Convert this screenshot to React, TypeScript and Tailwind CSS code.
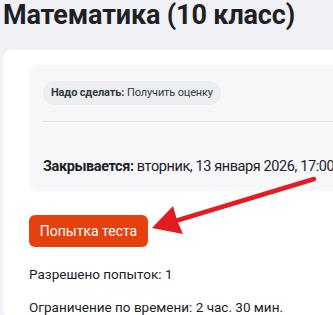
export default function App() {
  return (
    <div className="relative w-[333px] h-[315px] overflow-hidden bg-[#f1f2f6] pl-[3px] text-[#1d2125] font-['Roboto',sans-serif]">
      <h1 className="text-[27px] leading-[30px] font-bold tracking-[-0.15px] whitespace-nowrap">Математика (10 класс)</h1>

      <div className="mt-[20px] w-[380px] bg-white rounded-lg pl-[26px] pt-[15px]">
        <div className="bg-[#f7f8fa] rounded-lg px-[14px] pt-[14px] pb-[12px]">
          <div className="inline-flex items-center h-[24px] px-[8px] rounded-full bg-[#eceef1] text-[11px] tracking-[-0.15px] text-[#343a40]">
            <span className="font-bold mr-[3px]">Надо сделать:</span>
            <span>Получить оценку</span>
          </div>
          <div className="mt-[16px] border-t border-[#dee2e6]" />
          <div className="mt-[33px] text-[14.5px] leading-[24px] tracking-[-0.4px] whitespace-nowrap">
            <span className="font-bold">Закрывается:</span> вторник, 13 января 2026, 17:00
          </div>
        </div>

        <button className="mt-[24px] h-[32px] w-[119px] rounded-md bg-[#e5410f] text-white text-[14px]">
          Попытка теста
        </button>

        <p className="mt-[17px] text-[13.5px] leading-[20px]">Разрешено попыток: 1</p>
        <p className="mt-[13px] text-[13.5px] leading-[20px] whitespace-nowrap">Ограничение по времени: 2 час. 30 мин.</p>
      </div>

      <svg className="absolute left-0 top-0" width="333" height="315" viewBox="0 0 333 315">
        <line x1="314" y1="179" x2="172" y2="222" stroke="#e31b23" strokeWidth="4.5" strokeLinecap="round" />
        <path d="M152 228 L173 206 L177 220 L183 234 Z" fill="#e31b23" />
      </svg>
    </div>
  )
}
